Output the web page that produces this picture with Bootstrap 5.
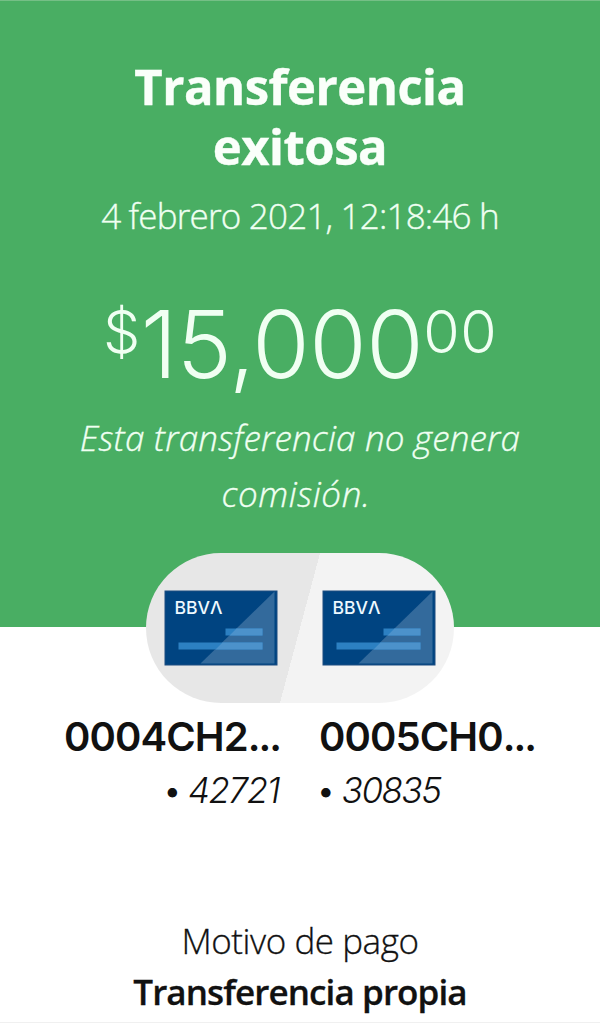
<!DOCTYPE html>
<html lang="es">
<head>
<meta charset="utf-8">
<meta name="viewport" content="width=device-width, initial-scale=1">
<title>Transferencia exitosa</title>
<link href="https://cdn.jsdelivr.net/npm/bootstrap@5.3.0/dist/css/bootstrap.min.css" rel="stylesheet">
<style>
body{font-family:"Open Sans","Noto Sans",sans-serif;color:#111;background:#fff;overflow:hidden}
.receipt{height:1023px;overflow:hidden;border-bottom:1px solid #f0f0f0}
.hero{height:627px;padding-top:55px;background:#49ae63;color:#f0fff2;border-top:1px solid #75bf86}
.title{font-size:49px;line-height:60px;font-weight:700;letter-spacing:-.5px;color:#fafffa;-webkit-text-stroke:.4px}
.date{font-size:35px;line-height:50px;margin-top:15px;font-weight:300;letter-spacing:-.8px;-webkit-text-stroke:.35px}
.amount{font-family:Inter,"Open Sans",sans-serif;font-size:93px;line-height:100px;height:100px;margin-top:53px;font-weight:300;letter-spacing:-.5px}
.cur{font-size:59px;line-height:60px;margin-top:8px;letter-spacing:.5px}
.note{font-size:35px;line-height:56px;margin-top:16px;font-weight:300;font-style:italic;letter-spacing:.2px;-webkit-text-stroke:.35px}
.n2{letter-spacing:.6px;padding-right:8px}
.pill{width:308px;height:150px;margin-top:-74px;border-radius:75px;background:linear-gradient(105deg,#e7e7e7 0 50%,#f3f3f3 50%)}
.accounts{margin-top:6px}
.from{width:281px}
.into{margin-left:38px}
.acct{font-family:Inter,"Open Sans",sans-serif;font-size:40px;line-height:56px;font-weight:600;letter-spacing:-.9px}
.dots{letter-spacing:-2px;margin-right:1px}
.num{font-family:Inter,"Open Sans",sans-serif;font-size:35px;line-height:50px;font-weight:300;letter-spacing:-1.500px;word-spacing:-1px}
.from .num{padding-right:2px}
.into .num{margin-left:-3px}
.reason{margin-top:100px;font-size:35px;line-height:51px;font-weight:300;letter-spacing:-.45px;-webkit-text-stroke:.3px}
.concept{font-weight:600;letter-spacing:-.9px}
</style>
</head>
<body>
<main class="receipt text-center text-nowrap">
  <header class="hero">
    <h1 class="title mb-0">Transferencia<br>exitosa</h1>
    <div class="date">4 febrero 2021, 12:18:46 h</div>
    <div class="amount d-flex justify-content-center align-items-start"><span class="cur">$</span><span>15,000</span><span class="cur">00</span></div>
    <div class="note">Esta transferencia no genera<br><span class="n2">comisión.</span></div>
  </header>
  <div class="pill mx-auto position-relative">
    <svg class="d-block" width="308" height="150" viewBox="0 0 308 150">
      <defs>
        <g id="bankcard">
          <rect x=".5" y=".5" width="112" height="74" fill="#004481" stroke="#1d4d80"/>
          <path d="M36 73 110 1v72z" fill="#336a9c"/>
          <path d="M61 38h37v7H61zM14 52h84v7H14z" fill="#2c80c2"/>
          <path d="M72 38h26v7H65zM58 52h40v7H51z" fill="#4c92cb"/>
          <text x="10" y="23.500" font-family="Inter" font-size="17.500" font-weight="500" fill="#eef9ff" textLength="48" lengthAdjust="spacingAndGlyphs">BBVΛ</text>
        </g>
      </defs>
      <use href="#bankcard" x="18.500" y="37.500"/>
      <use href="#bankcard" x="176.500" y="37.500"/>
    </svg>
  </div>
  <section class="accounts d-flex">
    <div class="from text-end"><div class="acct">0004CH2<span class="dots">...</span></div><div class="num">• <i>42721</i></div></div>
    <div class="into text-start"><div class="acct">0005CH0<span class="dots">...</span></div><div class="num">• <i>30835</i></div></div>
  </section>
  <section class="reason"><div>Motivo de pago</div><div class="concept">Transferencia propia</div></section>
</main>
<script src="https://cdn.jsdelivr.net/npm/bootstrap@5.3.0/dist/js/bootstrap.bundle.min.js"></script>
</body>
</html>
